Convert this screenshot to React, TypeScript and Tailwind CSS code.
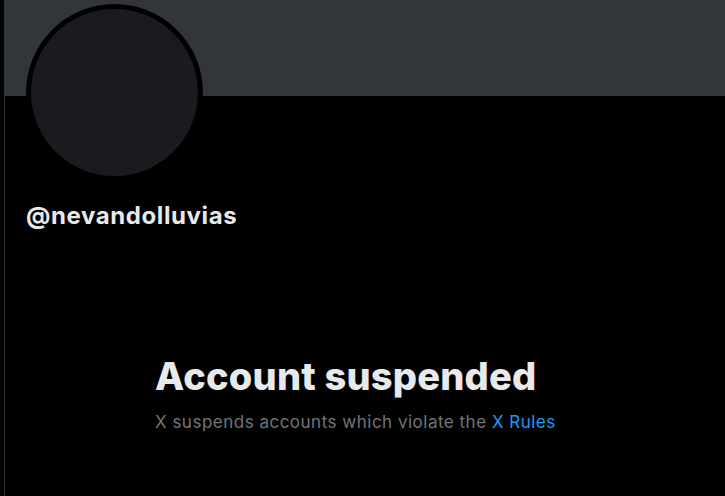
export default function App() {
  return (
    <div className="min-h-[496px] w-[725px] bg-black overflow-hidden" style={{ fontFamily: 'Inter, "Noto Sans", sans-serif' }}>
      <div className="ml-[4px] min-h-[496px] border-l border-[#2f3336]">
        <div className="h-[96px] bg-[#333639]" />
        <div className="-mt-[92px] ml-[21px] w-[177px] h-[177px] rounded-full border-[5px] border-black bg-[#1a1b1e]" />
        <div className="mt-[21px] ml-[21px] text-[24px] font-bold text-[#e7e9ea] leading-[28px] tracking-[0.6px]">@nevandolluvias</div>
        <div className="mt-[124px] ml-[150px]">
          <h1 className="text-[38px] font-extrabold text-[#e7e9ea] leading-[44px] tracking-[0.2px]">Account suspended</h1>
          <p className="mt-[12px] text-[17px] text-[#71767b] leading-[24px] tracking-[0.5px]">
            X suspends accounts which violate the <span className="text-[#1d9bf0]">X Rules</span>
          </p>
        </div>
      </div>
    </div>
  );
}
